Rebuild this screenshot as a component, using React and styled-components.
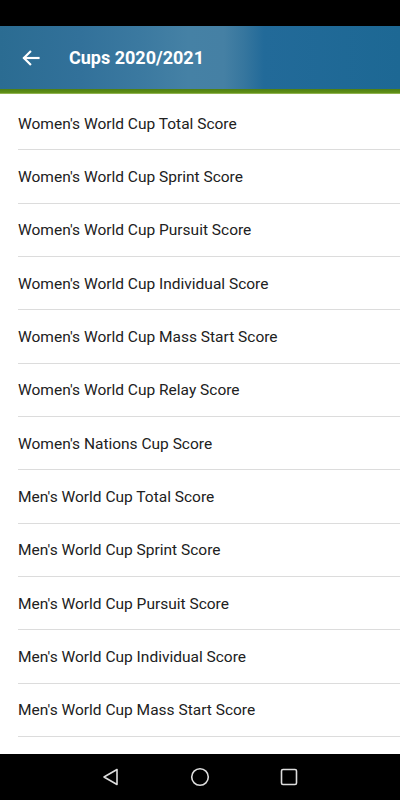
import styled, { createGlobalStyle } from 'styled-components';

const GlobalStyle = createGlobalStyle`
  html, body {
    margin: 0;
    padding: 0;
    background: #000;
  }
  body {
    font-family: Roboto, "Noto Sans", sans-serif;
  }
`;

const Screen = styled.div`
  width: 400px;
  height: 800px;
  display: flex;
  flex-direction: column;
  background: #000;
  overflow: hidden;
`;

const StatusBar = styled.div`
  height: 26px;
  flex-shrink: 0;
  background: #000;
`;

const Toolbar = styled.header`
  height: 63px;
  flex-shrink: 0;
  display: flex;
  align-items: center;
  padding: 0 0 0 20px;
  gap: 27px;
  background: linear-gradient(
    90deg,
    #2b6c92 0%,
    #32719a 20%,
    #3b79a0 35%,
    #4581a5 47%,
    #4580a4 56%,
    #36769e 61%,
    #226a99 66%,
    #1d6894 100%
  );
`;

const BackButton = styled.div`
  width: 22px;
  height: 22px;
  display: flex;
  align-items: center;
  justify-content: center;
`;

const Title = styled.h1`
  margin: 0;
  color: #fff;
  font-size: 18px;
  font-weight: 700;
`;

const Accent = styled.div`
  height: 5px;
  flex-shrink: 0;
  background: linear-gradient(180deg, #4e7f12 0%, #5f8f17 70%, #a8c46a 100%);
`;

const List = styled.ul`
  flex: 1;
  margin: 0;
  padding: 3px 0 0 0;
  list-style: none;
  background: #fff;
  overflow: hidden;
`;

const Row = styled.li`
  height: 53.35px;
  box-sizing: border-box;
  margin-left: 18px;
  display: flex;
  align-items: center;
  border-bottom: 1px solid #dcdcdc;
  font-size: 15.5px;
  color: #212121;
  padding-top: 1px;
`;

const NavBar = styled.nav`
  height: 46px;
  flex-shrink: 0;
  background: #000;
  display: flex;
  align-items: center;
  justify-content: center;
  gap: 69px;
`;

const items = [
  "Women's World Cup Total Score",
  "Women's World Cup Sprint Score",
  "Women's World Cup Pursuit Score",
  "Women's World Cup Individual Score",
  "Women's World Cup Mass Start Score",
  "Women's World Cup Relay Score",
  "Women's Nations Cup Score",
  "Men's World Cup Total Score",
  "Men's World Cup Sprint Score",
  "Men's World Cup Pursuit Score",
  "Men's World Cup Individual Score",
  "Men's World Cup Mass Start Score",
];

const App = () => (
  <>
    <GlobalStyle />
    <Screen>
      <StatusBar />
      <Toolbar>
        <BackButton>
          <svg width="20" height="20" viewBox="0 0 24 24" fill="none" stroke="#fff" strokeWidth="2.6" strokeLinecap="square">
            <path d="M21 12H4" />
            <path d="M11 4.5L3.5 12l7.5 7.5" />
          </svg>
        </BackButton>
        <Title>Cups 2020/2021</Title>
      </Toolbar>
      <Accent />
      <List>
        {items.map((name) => (
          <Row key={name}>{name}</Row>
        ))}
      </List>
      <NavBar>
        <svg width="20" height="20" viewBox="0 0 20 20" fill="none" stroke="#ddd" strokeWidth="1.6" strokeLinejoin="round">
          <path d="M16 2.5v15L3 10z" />
        </svg>
        <svg width="20" height="20" viewBox="0 0 20 20" fill="none" stroke="#ddd" strokeWidth="1.6">
          <circle cx="10" cy="10" r="8.3" />
        </svg>
        <svg width="20" height="20" viewBox="0 0 20 20" fill="none" stroke="#ddd" strokeWidth="1.6">
          <rect x="2.5" y="2.5" width="15" height="15" rx="1.5" />
        </svg>
      </NavBar>
    </Screen>
  </>
);

export default App;
